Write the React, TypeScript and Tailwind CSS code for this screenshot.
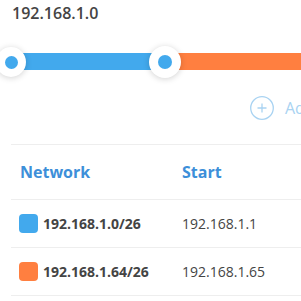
import React from "react";

const BLUE = "#42a9ed";

export default function App() {
  return (
    <div className="w-[301px] h-[301px] overflow-hidden bg-white font-['Open_Sans',sans-serif]">
      <div className="pl-3 pt-[2px] text-[16px] leading-[22px] font-semibold text-[#444]">192.168.1.0</div>
      <div className="relative mt-[23px] h-[30px]">
        <div className="absolute left-[11px] right-0 top-[6px] h-[17px] flex">
          <div className="w-[153px] bg-[#42a9ed]" />
          <div className="flex-1 bg-[#ff7f40]" />
        </div>
        <div className="absolute left-[-4px] top-0 w-[30px] h-[30px] rounded-full bg-white shadow-[0_1px_6px_rgba(0,0,0,0.18)] flex items-center justify-center">
          <div className="w-[13px] h-[13px] rounded-full bg-[#42a9ed]" />
        </div>
        <div className="absolute left-[149px] top-[-1px] w-[32px] h-[32px] rounded-full bg-white shadow-[0_1px_6px_rgba(0,0,0,0.18)] flex items-center justify-center">
          <div className="w-[14px] h-[14px] rounded-full bg-[#42a9ed]" />
        </div>
      </div>
      <div className="mt-[19px] h-[24px] ml-[250px] flex items-center gap-[11px] whitespace-nowrap text-[#a9d3f2] overflow-hidden">
        <svg className="shrink-0" width="24" height="24" viewBox="0 0 24 24" fill="none" stroke="#a9d3f2" strokeWidth="1.3">
          <circle cx="12" cy="12" r="11.3" />
          <path d="M12 7.5v9M7.5 12h9" />
        </svg>
        <span className="text-[16px] shrink-0">Add Network</span>
      </div>
      <div className="ml-[11px] mt-[24px] border-t border-[#eeeeee]">
        <div className="h-[55px] flex items-center border-b border-[#eeeeee] text-[16px] font-bold text-[#3d8fd9]">
          <div className="w-[171px] pl-[9px]">Network</div>
          <div>Start</div>
        </div>
        {[
          { c: BLUE, n: "192.168.1.0/26", s: "192.168.1.1" },
          { c: "#ff7f40", n: "192.168.1.64/26", s: "192.168.1.65" },
        ].map((r) => (
          <div key={r.n} className="h-[48px] flex items-center border-b border-[#eeeeee] text-[14px] text-[#444]">
            <div className="w-[171px] pl-[8px] flex items-center gap-[5px]">
              <div className="w-[19px] h-[19px] rounded-[4px]" style={{ background: r.c }} />
              <span className="font-bold">{r.n}</span>
            </div>
            <div>{r.s}</div>
          </div>
        ))}
      </div>
    </div>
  );
}
